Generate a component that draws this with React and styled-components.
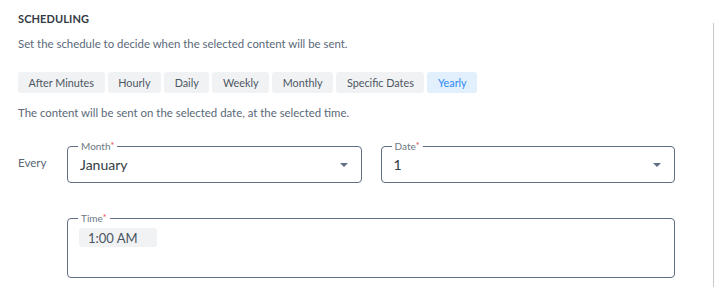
import React, { useState } from 'react';
import styled, { createGlobalStyle } from 'styled-components';

const GlobalStyle = createGlobalStyle`
  body {
    margin: 0;
    background: #ffffff;
    font-family: Lato, "Open Sans", sans-serif;
  }
`;

const Page = styled.div`
  position: relative;
  width: 714px;
  height: 292px;
  box-sizing: border-box;
  padding: 11px 39px 0 18px;

  &::after {
    content: '';
    position: absolute;
    right: 0;
    top: 23px;
    bottom: 5px;
    width: 1px;
    background: #c9c9c9;
  }
`;

const Title = styled.div`
  font-size: 11px;
  font-weight: 700;
  line-height: 16px;
  color: #333b45;
  letter-spacing: 0.1px;
`;

const Note = styled.div`
  margin-top: ${(p) => p.top}px;
  font-size: 11.4px;
  line-height: 16px;
  color: #5a6878;
`;

const Tabs = styled.div`
  display: flex;
  gap: 3px;
  margin-top: 20px;
`;

const Tab = styled.button`
  height: 21px;
  padding: 0 10.6px;
  border: none;
  border-radius: 3px;
  font-family: inherit;
  font-size: 10.8px;
  background: ${(p) => (p.active ? '#e2f0fe' : '#f1f2f4')};
  color: ${(p) => (p.active ? '#2a89f5' : '#4d5763')};
  cursor: pointer;
`;

const Row = styled.div`
  display: flex;
  align-items: center;
  margin-top: ${(p) => p.top}px;
`;

const RowLabel = styled.div`
  width: 49px;
  flex-shrink: 0;
  font-size: 11.6px;
  color: #5a6878;
  padding-bottom: 4px;
`;

const Fields = styled.div`
  display: flex;
  gap: 19px;
  flex: 1;
  margin-left: ${(p) => (p.indent ? 49 : 0)}px;
`;

const Field = styled.div`
  position: relative;
  flex: 1;
  height: ${(p) => p.h}px;
  box-sizing: border-box;
  border: 1px solid #5f6e82;
  border-radius: 4px;
  display: flex;
  align-items: ${(p) => (p.top ? 'flex-start' : 'center')};
  padding: ${(p) => (p.top ? '9px 12px 0 11px' : '0 13px 0 12px')};
`;

const Legend = styled.span`
  position: absolute;
  left: 10px;
  top: -7px;
  padding: 0 3px;
  background: #ffffff;
  font-size: 10px;
  line-height: 12px;
  color: #6b7785;

  & b {
    color: #e5484d;
    font-weight: 400;
    font-size: 9px;
    vertical-align: top;
  }
`;

const Value = styled.span`
  flex: 1;
  font-size: 14px;
  color: #333b45;
  padding-bottom: 1px;
`;

const Caret = styled.span`
  width: 0;
  height: 0;
  border-left: 4px solid transparent;
  border-right: 4px solid transparent;
  border-top: 4px solid #5f6e82;
`;

const Chip = styled.span`
  display: inline-flex;
  align-items: center;
  height: 19px;
  width: 78px;
  box-sizing: border-box;
  padding-left: 9px;
  border-radius: 3px;
  background: #f1f2f4;
  font-size: 13px;
  color: #4a5462;
`;

const tabs = ['After Minutes', 'Hourly', 'Daily', 'Weekly', 'Monthly', 'Specific Dates', 'Yearly'];

function Select({ label, value }) {
  return (
    <Field h={37}>
      <Legend>
        {label}
        <b>*</b>
      </Legend>
      <Value>{value}</Value>
      <Caret />
    </Field>
  );
}

export default function App() {
  const [active, setActive] = useState('Yearly');

  return (
    <Page>
      <GlobalStyle />
      <Title>SCHEDULING</Title>
      <Note top={9}>Set the schedule to decide when the selected content will be sent.</Note>
      <Tabs>
        {tabs.map((t) => (
          <Tab key={t} active={active === t} onClick={() => setActive(t)}>
            {t}
          </Tab>
        ))}
      </Tabs>
      <Note top={12}>The content will be sent on the selected date, at the selected time.</Note>
      <Row top={25}>
        <RowLabel>Every</RowLabel>
        <Fields>
          <Select label="Month" value="January" />
          <Select label="Date" value="1" />
        </Fields>
      </Row>
      <Row top={35}>
        <Fields indent>
          <Field h={60} top>
            <Legend>
              Time
              <b>*</b>
            </Legend>
            <Chip>1:00 AM</Chip>
          </Field>
        </Fields>
      </Row>
    </Page>
  );
}
